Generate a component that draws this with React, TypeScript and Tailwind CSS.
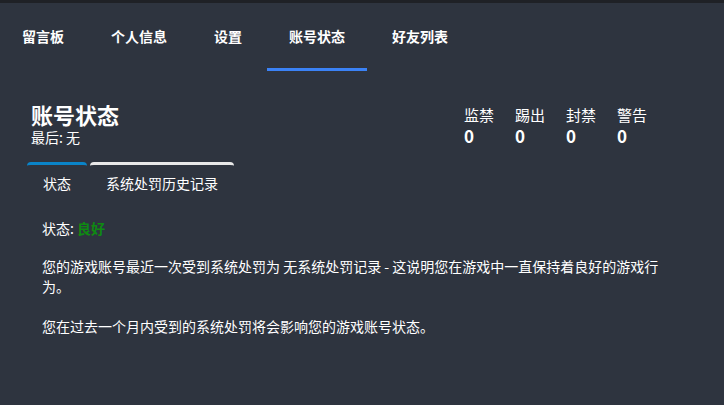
import React, { useState } from 'react';

const navItems = ['留言板', '个人信息', '设置', '账号状态', '好友列表'];
const stats = [
  { label: '监禁', value: 0 },
  { label: '踢出', value: 0 },
  { label: '封禁', value: 0 },
  { label: '警告', value: 0 },
];

export default function App() {
  const [active, setActive] = useState('账号状态');
  const [tab, setTab] = useState('status');

  return (
    <div
      className="min-h-[405px] w-full bg-[#2e343f] text-white border-t-[3px] border-[#1f2126]"
      style={{ fontFamily: '"Noto Sans CJK SC", "Liberation Sans", sans-serif' }}
    >
      {/* top navigation */}
      <nav className="flex gap-[3px] h-[68px]">
        {navItems.map((item) => (
          <button
            key={item}
            onClick={() => setActive(item)}
            className={`px-[22px] h-full text-[14px] font-bold leading-none border-b-[3px] pt-[1px] ${
              active === item ? 'border-[#3b82f6]' : 'border-transparent'
            }`}
          >
            {item}
          </button>
        ))}
      </nav>

      {/* header */}
      <div className="flex items-start justify-between pl-[31px] pr-[76px] pt-[30px]">
        <div>
          <h1 className="text-[22px] font-bold leading-[26px]">账号状态</h1>
          <p className="text-[14px] leading-[18px] mt-[1px]">最后: 无</p>
        </div>
        <div className="flex gap-[20px] pt-[4px]">
          {stats.map((s) => (
            <div key={s.label} className="w-[31px]">
              <div className="text-[15px] leading-[20px]">{s.label}</div>
              <div className="text-[17px] font-bold leading-[21px]">{s.value}</div>
            </div>
          ))}
        </div>
      </div>

      {/* sub tabs */}
      <div className="flex gap-[3px] pl-[27px] mt-[16px]">
        <button
          onClick={() => setTab('status')}
          className={`px-[16px] pt-[8px] pb-[6px] text-[14px] leading-[20px] border-t-[3px] rounded-t-[4px] ${
            tab === 'status' ? 'border-[#0a84c8]' : 'border-[#e8e8e8]'
          }`}
        >
          状态
        </button>
        <button
          onClick={() => setTab('history')}
          className={`px-[16px] pt-[8px] pb-[6px] text-[14px] leading-[20px] border-t-[3px] rounded-t-[4px] ${
            tab === 'history' ? 'border-[#0a84c8]' : 'border-[#e8e8e8]'
          }`}
        >
          系统处罚历史记录
        </button>
      </div>

      {/* content */}
      <div className="pl-[42px] w-[666px] pt-[19px] text-[14px] leading-[20px]">
        <p>
          状态: <span className="text-[#0f8a12] font-bold">良好</span>
        </p>
        <p className="mt-[18px]">
          您的游戏账号最近一次受到系统处罚为 无系统处罚记录 - 这说明您在游戏中一直保持着良好的游戏行为。
        </p>
        <p className="mt-[20px]">您在过去一个月内受到的系统处罚将会影响您的游戏账号状态。</p>
      </div>
    </div>
  );
}
